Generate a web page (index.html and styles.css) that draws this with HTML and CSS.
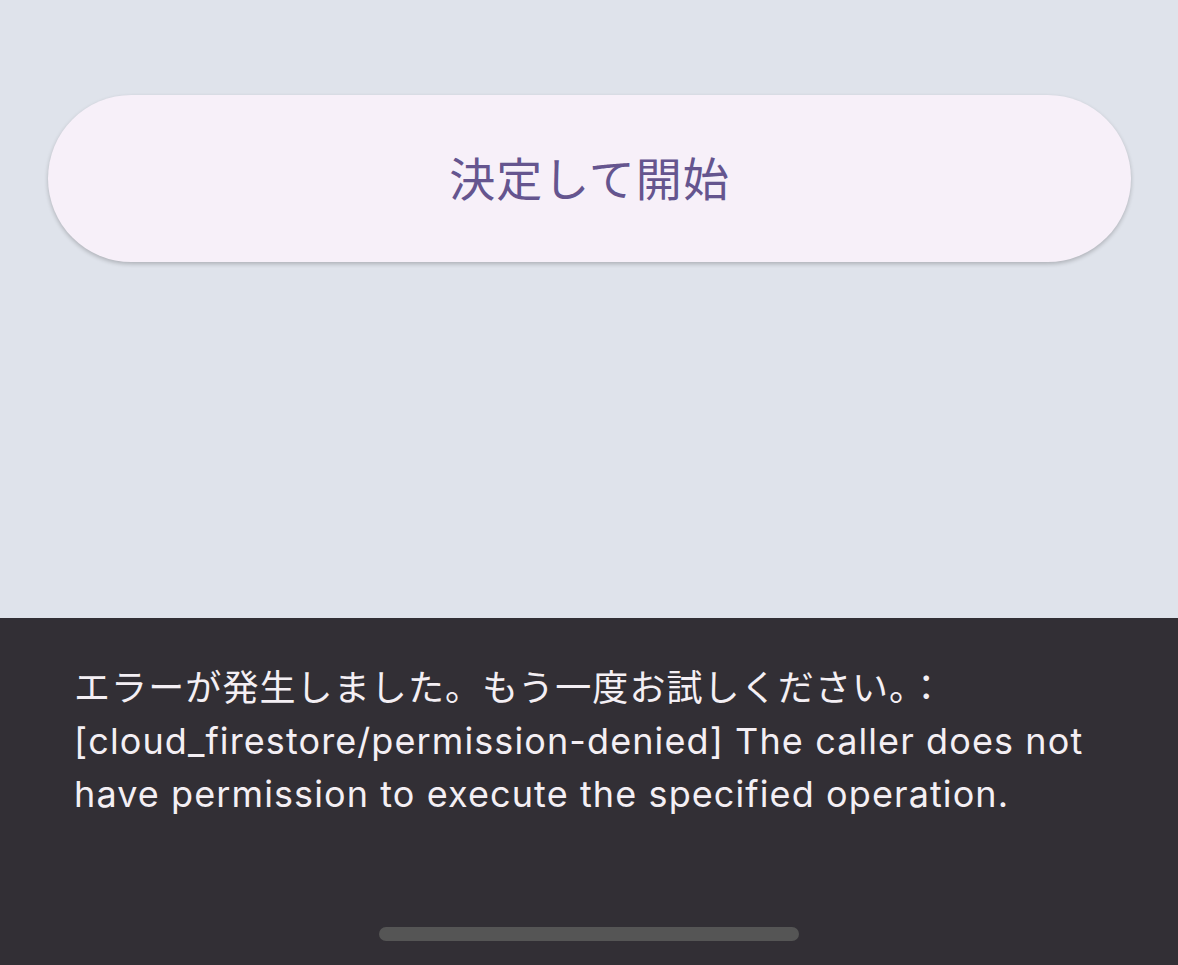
FILE: index.html
```html
<!DOCTYPE html>
<html>
<head>
    <title>決定して開始</title>
    <link rel="stylesheet" href="styles.css">
</head>
<body>
    <div class="screen">
        <div class="content">
            <button class="start-button" type="button">決定して開始</button>
        </div>
        <div class="snackbar">
            <p class="snackbar-text">エラーが発生しました。もう一度お試しください。：<br>[cloud_firestore/permission-denied] The caller does not<br>have permission to execute the specified operation.</p>
            <div class="home-indicator"></div>
        </div>
    </div>
</body>
</html>
```

FILE: styles.css
```css
body {
    margin: 0;
    background-color: #dfe3eb;
    font-family: Inter, "Noto Sans CJK JP", sans-serif;
}

.screen {
    display: flex;
    flex-direction: column;
    height: 965px;
    overflow: hidden;
}

.content {
    height: 618px;
    padding: 95px 47px 0 48px;
    box-sizing: border-box;
}

.start-button {
    display: block;
    width: 100%;
    height: 167px;
    padding: 0 0 6px 0;
    border: none;
    border-radius: 84px;
    background-color: #f7f0f9;
    color: #65558f;
    font-family: "Noto Sans CJK JP", sans-serif;
    font-size: 46px;
    font-weight: 400;
    letter-spacing: 1px;
    box-shadow: 0 2px 4px rgba(0, 0, 0, 0.22);
    cursor: pointer;
}

.snackbar {
    flex: 1;
    display: flex;
    flex-direction: column;
    align-items: center;
    background-color: #322f35;
    padding: 0 20px 24px 74px;
}

.snackbar-text {
    align-self: stretch;
    margin: 44px 0 0 0;
    color: #f4eff4;
    font-size: 36px;
    line-height: 53px;
    letter-spacing: 1.1px;
}

.home-indicator {
    margin-top: auto;
    margin-left: -54px;
    width: 420px;
    height: 14px;
    border-radius: 7px;
    background-color: #555555;
}
```
